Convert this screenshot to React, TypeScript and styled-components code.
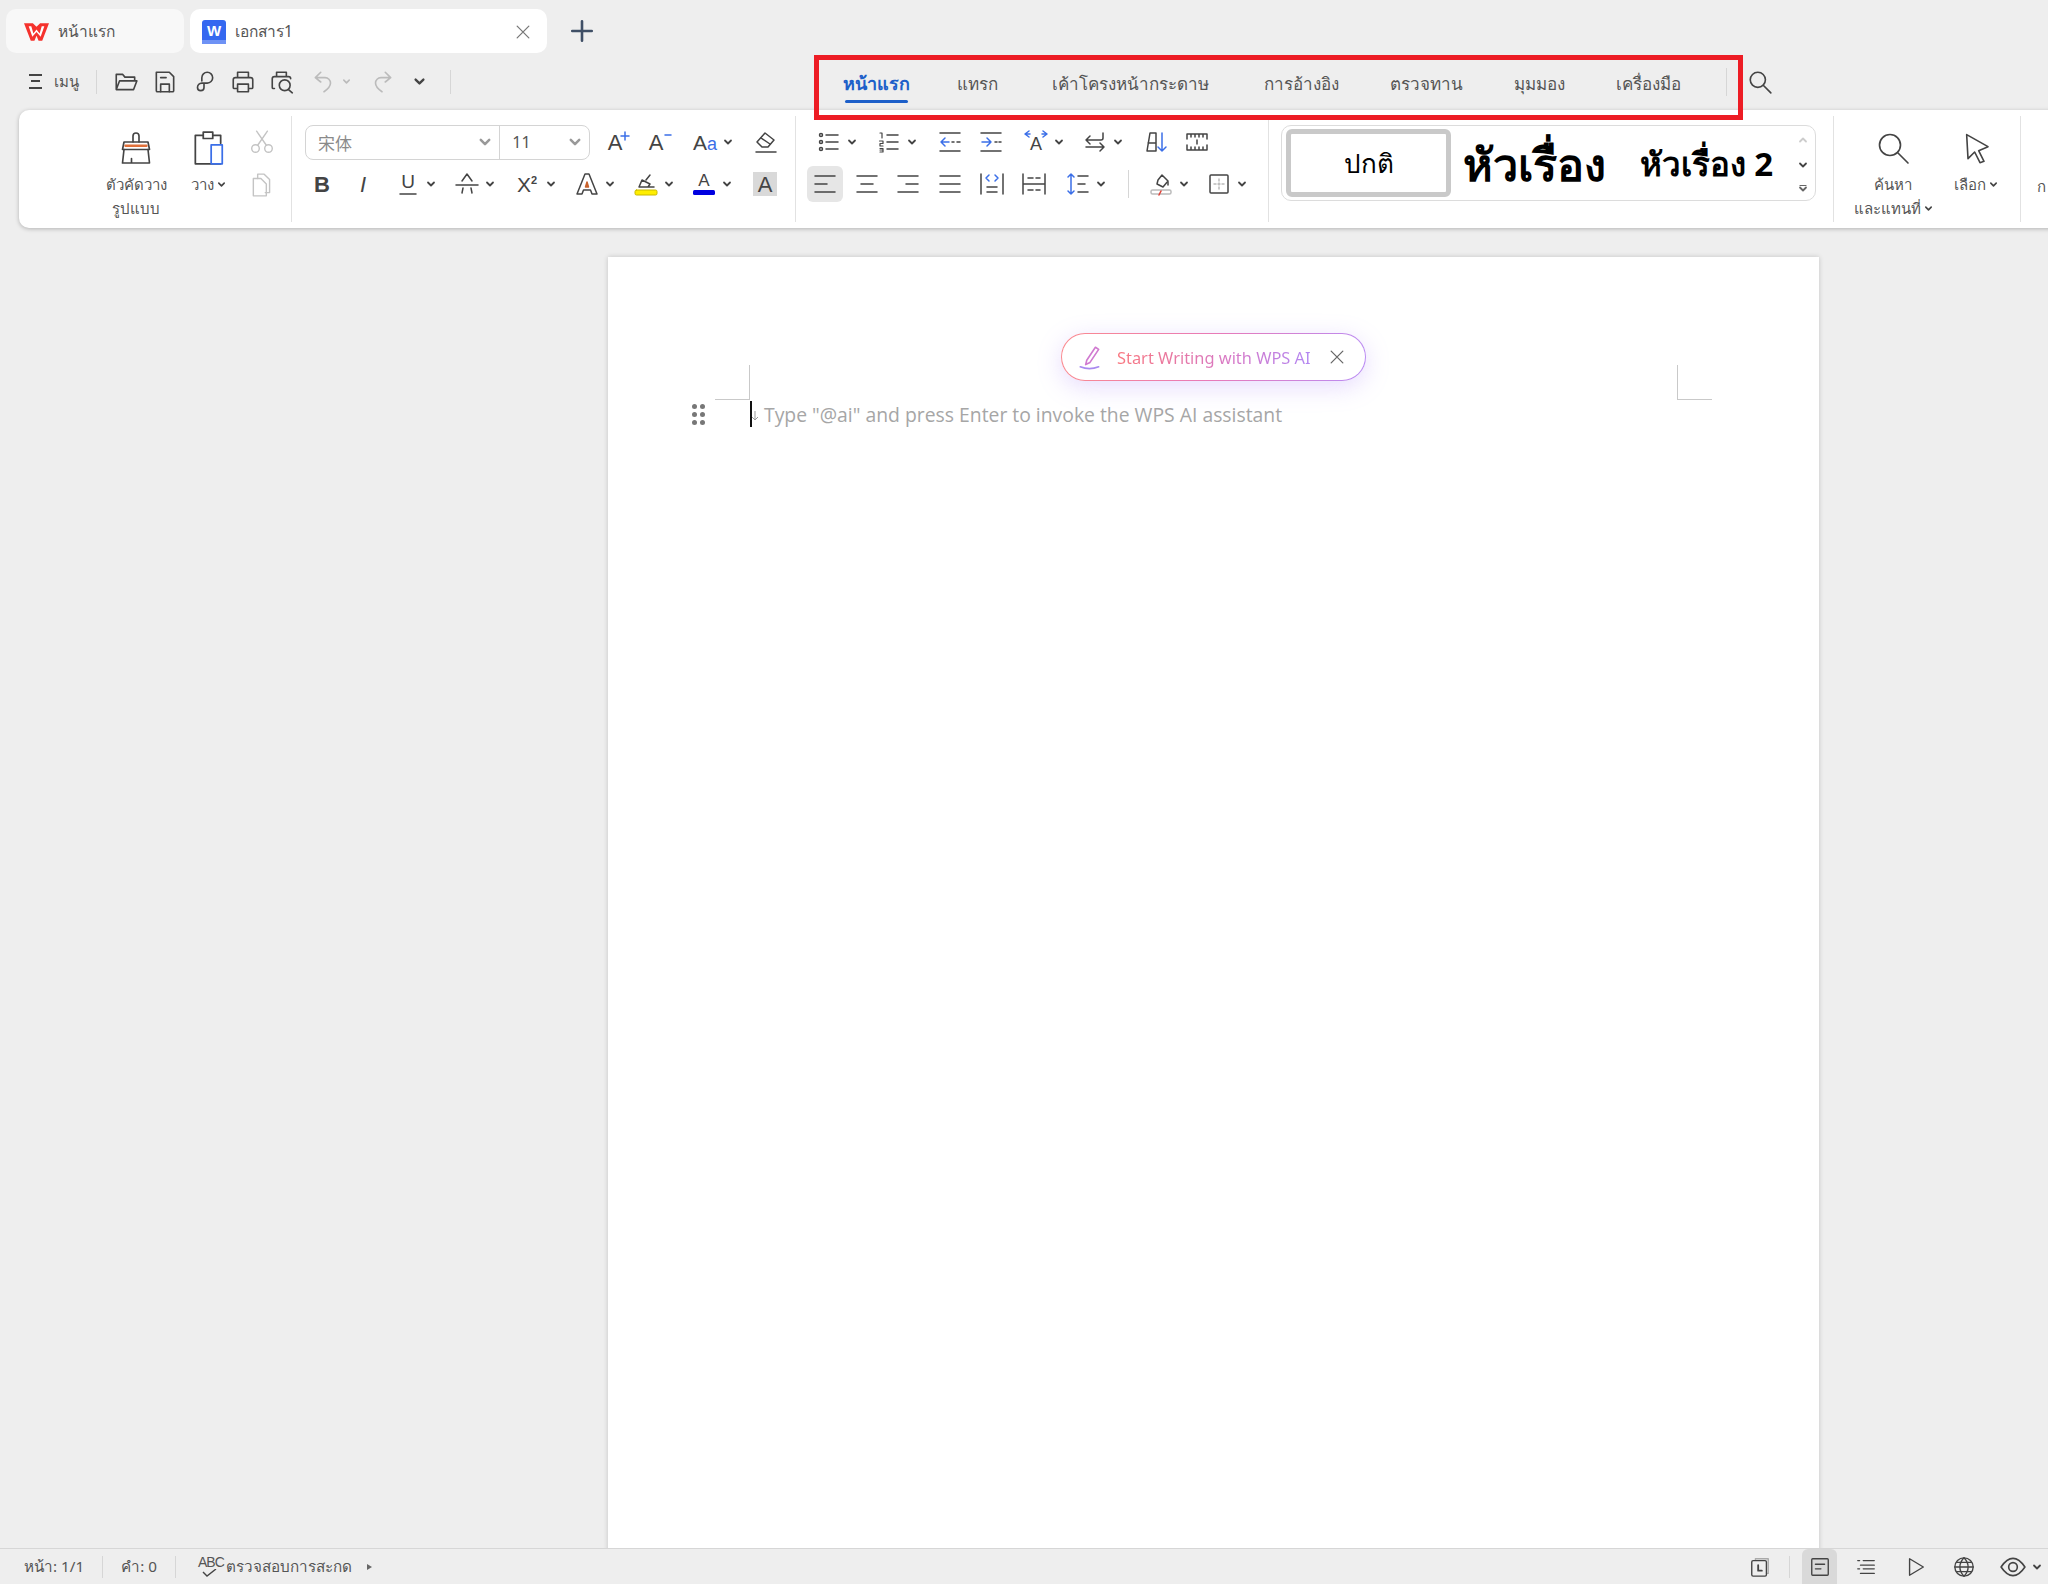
import React from 'react';
import styled, { createGlobalStyle } from 'styled-components';

const GlobalStyle = createGlobalStyle`
  html, body { margin: 0; padding: 0; background: #eeeeee; }
  body { font-family: "Noto Sans", "Liberation Sans", sans-serif; color: #4a4a4a; }
`;

const BLUE = '#3b6fe8';

const Shell = styled.div`
  width: 2048px;
  height: 1584px;
  background: #eeeeee;
  display: flex;
  flex-direction: column;
  overflow: hidden;
`;

type GlyphProps = { $size?: number; $color?: string; $sw?: number };

const Glyph = styled.svg.attrs<GlyphProps>((p) => ({
  viewBox: '0 0 24 24',
  fill: 'none',
  stroke: 'currentColor',
  strokeWidth: p.$sw ?? 1.5,
  strokeLinecap: 'round',
  strokeLinejoin: 'round',
}))<GlyphProps>`
  width: ${(p) => p.$size ?? 24}px;
  height: ${(p) => p.$size ?? 24}px;
  flex: none;
  color: ${(p) => p.$color ?? '#444'};
  display: block;
  overflow: visible;
`;

const IconLabel = styled.text`
  font-family: "Liberation Sans", sans-serif;
  stroke: none;
  fill: currentColor;
`;

const CaretSvg = styled.svg.attrs({ viewBox: '0 0 10 10', fill: 'none', stroke: 'currentColor', strokeWidth: 1.8, strokeLinecap: 'round', strokeLinejoin: 'round' })<{ $color?: string; $size?: number; $up?: boolean }>`
  width: ${(p) => p.$size ?? 10}px;
  height: ${(p) => p.$size ?? 10}px;
  flex: none;
  color: ${(p) => p.$color ?? '#444'};
  transform: ${(p) => (p.$up ? 'rotate(180deg)' : 'none')};
`;
const Caret = (p: { $color?: string; $size?: number; $up?: boolean; $bar?: boolean }) => (
  <CaretSvg {...p}>
    {p.$bar && <path d="M2 1.500h6" strokeWidth="1.200" />}
    <path d="M2 3.500 5 6.500 8 3.500" />
  </CaretSvg>
);

/* ---------- document tabs ---------- */
const TabStrip = styled.div`
  height: 53px;
  flex: none;
  display: flex;
  align-items: flex-end;
  padding-left: 6px;
  gap: 6px;
`;
const DocTab = styled.div<{ $active?: boolean; $w: number }>`
  width: ${(p) => p.$w}px;
  height: 44px;
  box-sizing: border-box;
  border-radius: 10px;
  background: ${(p) => (p.$active ? '#ffffff' : '#f8f8f8')};
  display: flex;
  align-items: center;
  padding: 1px 14px 0 ${(p) => (p.$active ? 12 : 18)}px;
  gap: 9px;
  font-size: 15.5px;
  color: #555;
`;
const TabClose = styled.span`
  margin-left: auto;
  display: flex;
`;
const NewTab = styled.div`
  margin: 0 0 9px 16px;
  display: flex;
  align-items: center;
  height: 26px;
`;

/* ---------- quick access + ribbon tabs ---------- */
const QuickBar = styled.div`
  height: 57px;
  flex: none;
  display: flex;
  align-items: center;
`;
const QuickTools = styled.div`
  width: 825px;
  flex: none;
  display: flex;
  align-items: center;
  padding-left: 29px;
  box-sizing: border-box;
`;
const MenuButton = styled.div`
  display: flex;
  align-items: center;
  gap: 12px;
  font-size: 15px;
  color: #555;
`;
const MenuBars = styled.span`
  width: 13px;
  height: 15px;
  border-top: 2px solid #444;
  border-bottom: 2px solid #444;
  box-sizing: border-box;
  position: relative;
  &::after {
    content: '';
    position: absolute;
    left: 2px;
    right: 2px;
    top: 4px;
    height: 2px;
    background: #444;
  }
`;
const Divider = styled.span<{ $h?: number; $ml?: number; $mr?: number }>`
  width: 1px;
  height: ${(p) => p.$h ?? 24}px;
  background: #d6d6d6;
  flex: none;
  margin-left: ${(p) => p.$ml ?? 0}px;
  margin-right: ${(p) => p.$mr ?? 0}px;
`;
const QuickIcon = styled.span<{ $ml?: number }>`
  display: flex;
  align-items: center;
  gap: 5px;
  margin-left: ${(p) => p.$ml ?? 13}px;
`;
const RibbonNav = styled.nav`
  position: relative;
  display: flex;
  align-items: center;
  height: 100%;
  z-index: 3;
`;
const RibbonTab = styled.div<{ $w: number; $active?: boolean }>`
  width: ${(p) => p.$w}px;
  flex: none;
  text-align: center;
  padding-top: 4px;
  font-size: ${(p) => (p.$active ? 18 : 17)}px;
  position: relative;
  color: ${(p) => (p.$active ? '#1d5fc9' : '#555')};
  font-weight: ${(p) => (p.$active ? 700 : 400)};
  &::after {
    content: '';
    display: ${(p) => (p.$active ? 'block' : 'none')};
    position: absolute;
    left: 20px;
    right: 19px;
    bottom: -5px;
    height: 3px;
    border-radius: 2px;
    background: #1d5fc9;
  }
`;
const Highlight = styled.div`
  position: absolute;
  left: -11px;
  top: 2px;
  width: 929px;
  height: 65px;
  box-sizing: border-box;
  border: 5px solid #ed1c24;
  pointer-events: none;
`;

/* ---------- ribbon ---------- */
const Ribbon = styled.div`
  flex: none;
  height: 118px;
  margin: 0 -20px 0 19px;
  box-sizing: border-box;
  background: #ffffff;
  border-radius: 10px;
  box-shadow: 0 1px 4px rgba(0, 0, 0, 0.25);
  display: flex;
  padding: 6px 0;
  position: relative;
`;
const Group = styled.section<{ $w: number; $last?: boolean }>`
  width: ${(p) => p.$w}px;
  flex: none;
  box-sizing: border-box;
  border-right: ${(p) => (p.$last ? 'none' : '1px solid #e2e2e2')};
  display: flex;
`;
const StackGroup = styled(Group)`
  flex-direction: column;
  padding-top: 8px;
  gap: 6px;
`;
const ToolRow = styled.div`
  display: flex;
  align-items: center;
  height: 36px;
`;
const Tool = styled.div<{ $ml?: number; $active?: boolean; $shaded?: boolean }>`
  display: flex;
  align-items: center;
  justify-content: center;
  gap: 6px;
  flex: none;
  margin-left: ${(p) => p.$ml ?? 0}px;
  ${(p) => p.$active && 'width: 36px; height: 36px; border-radius: 6px; background: #e6e6e6;'}
  ${(p) => p.$shaded && 'background: #d9d9d9;'}
`;
const LargeTool = styled.div<{ $w: number; $ml?: number }>`
  width: ${(p) => p.$w}px;
  margin-left: ${(p) => p.$ml ?? 0}px;
  flex: none;
  display: flex;
  flex-direction: column;
  align-items: center;
  padding-top: 14px;
`;
const LargeIcon = styled.div`
  height: 36px;
  display: flex;
  align-items: center;
  margin-bottom: 6px;
`;
const ToolText = styled.div`
  font-size: 15px;
  line-height: 24px;
  height: 24px;
  color: #555;
  display: flex;
  align-items: center;
  gap: 3px;
  white-space: nowrap;
`;
const SmallColumn = styled.div`
  width: 26px;
  margin-left: 18px;
  padding-top: 13px;
  display: flex;
  flex-direction: column;
  gap: 17px;
`;
const FontCombo = styled.div`
  width: 285px;
  height: 35px;
  box-sizing: border-box;
  margin-left: 13px;
  border: 1px solid #d4d4d4;
  border-radius: 8px;
  display: flex;
  align-items: center;
  flex: none;
`;
const ComboPart = styled.div<{ $w: number; $color: string; $font: string; $size: number }>`
  width: ${(p) => p.$w}px;
  height: 100%;
  box-sizing: border-box;
  display: flex;
  align-items: center;
  justify-content: space-between;
  padding: 0 7px 0 12px;
  color: ${(p) => p.$color};
  font-family: ${(p) => p.$font};
  font-size: ${(p) => p.$size}px;
  & + & { border-left: 1px solid #d4d4d4; }
`;
const Gallery = styled.div`
  width: 535px;
  height: 76px;
  margin: 9px 0 0 12px;
  box-sizing: border-box;
  border: 1px solid #dcdcdc;
  border-radius: 10px;
  padding: 3px 0 3px 4px;
  display: flex;
  align-items: center;
`;
const StyleCard = styled.div<{ $w: number; $selected?: boolean; $size: number; $ml?: number }>`
  width: ${(p) => p.$w}px;
  height: 68px;
  margin-left: ${(p) => p.$ml ?? 0}px;
  flex: none;
  box-sizing: border-box;
  padding-top: ${(p) => (p.$selected ? 1 : 3)}px;
  display: flex;
  align-items: center;
  justify-content: center;
  color: #000;
  white-space: nowrap;
  font-size: ${(p) => p.$size}px;
  font-weight: ${(p) => (p.$selected ? 400 : 700)};
  ${(p) => p.$selected && 'border: 5px solid #c9c9c9; border-radius: 6px;'}
`;
const GalleryScroll = styled.div`
  margin-left: auto;
  width: 24px;
  height: 62px;
  display: flex;
  flex-direction: column;
  align-items: center;
  justify-content: space-between;
  padding-top: 3px;
  box-sizing: border-box;
`;
const EdgeText = styled(ToolText)`
  margin: 58px 0 0 16px;
`;

/* ---------- workspace ---------- */
const Workspace = styled.div`
  flex: 1;
  min-height: 0;
  overflow: hidden;
  padding: 29px 0 0 608px;
`;
const Page = styled.div`
  position: relative;
  width: 1211px;
  height: 1400px;
  background: #ffffff;
  box-shadow: 0 0 5px rgba(0, 0, 0, 0.18);
  display: flex;
  flex-direction: column;
  align-items: flex-start;
`;
const CropMark = styled.span<{ $left: number; $right?: boolean }>`
  position: absolute;
  left: ${(p) => p.$left}px;
  top: 108px;
  width: 35px;
  height: 35px;
  box-sizing: border-box;
  border-bottom: 1px solid #c9c9c9;
  ${(p) => (p.$right ? 'border-left: 1px solid #c9c9c9;' : 'border-right: 1px solid #c9c9c9;')}
`;
const AiPill = styled.div`
  align-self: center;
  margin-top: 76px;
  width: 305px;
  height: 48px;
  box-sizing: border-box;
  border: 1.5px solid transparent;
  border-radius: 24px;
  background:
    linear-gradient(#fff, #fff) padding-box,
    linear-gradient(100deg, #fb8a8e, #e87ab8 50%, #b98cf5) border-box;
  box-shadow: 0 6px 24px rgba(170, 130, 250, 0.28);
  display: flex;
  align-items: center;
  padding: 0 18px 0 15px;
  gap: 14px;
  position: relative;
  z-index: 1;
`;
const AiText = styled.span`
  font-family: "Noto Sans", sans-serif;
  font-size: 16.4px;
  white-space: nowrap;
  background: linear-gradient(90deg, #f9777f, #d678c8 60%, #b287f3);
  -webkit-background-clip: text;
  background-clip: text;
  color: transparent;
`;
const AiClose = styled.span`
  margin-left: auto;
  display: flex;
`;
const PromptRow = styled.div`
  display: flex;
  align-items: center;
  height: 28px;
  margin-top: 19px;
  padding-left: 84px;
`;
const DragHandle = styled.div`
  width: 13px;
  margin-right: -2px;
  display: grid;
  grid-template-columns: 5px 5px;
  grid-auto-rows: 5px;
  gap: 3px;
  & > i {
    background: #777;
    border-radius: 50%;
  }
`;
const Cursor = styled.span`
  width: 2px;
  height: 26px;
  background: #111;
  margin-left: 47px;
`;
const ReturnMark = styled.svg.attrs({ viewBox: '0 0 8 12', fill: 'none', stroke: '#999', strokeWidth: 1 })`
  width: 8px;
  height: 12px;
  margin: 4px 0 0 -1px;
  flex: none;
`;
const Placeholder = styled.span`
  font-family: "Open Sans", "Noto Sans", sans-serif;
  font-size: 19.35px;
  color: #a6a6a6;
  margin-left: 5px;
  white-space: nowrap;
`;

/* ---------- status bar ---------- */
const StatusBar = styled.footer`
  height: 36px;
  flex: none;
  box-sizing: border-box;
  border-top: 1px solid #d6d6d6;
  background: #eeeeee;
  display: flex;
  align-items: center;
  font-size: 15.25px;
  color: #555;
  padding-left: 24px;
  position: relative;
  z-index: 2;
`;
const StatusText = styled.span<{ $ml?: number }>`
  margin-left: ${(p) => p.$ml ?? 0}px;
  white-space: nowrap;
`;
const SpellIcon = styled.span`
  margin-left: 22px;
  margin-right: 3px;
  font-size: 14px;
  letter-spacing: -1px;
  line-height: 14px;
  position: relative;
  width: 25px;
  height: 24px;
  font-family: "Liberation Sans", sans-serif;
`;
const SpellTick = styled.svg.attrs({ viewBox: '0 0 16 8', fill: 'none', stroke: '#444', strokeWidth: 1.4 })`
  position: absolute;
  left: 4px;
  top: 14px;
  width: 16px;
  height: 8px;
`;
const MoreArrow = styled.span`
  margin-left: 15px;
  width: 0;
  height: 0;
  border-left: 5px solid #666;
  border-top: 3.5px solid transparent;
  border-bottom: 3.5px solid transparent;
`;
const StatusRight = styled.div`
  margin-left: auto;
  display: flex;
  align-items: center;
  height: 100%;
  padding-right: 6px;
`;
const StatusIcon = styled.span<{ $ml?: number; $active?: boolean }>`
  display: flex;
  align-items: center;
  justify-content: center;
  gap: 6px;
  height: 100%;
  margin-left: ${(p) => p.$ml ?? 0}px;
  ${(p) => p.$active && 'width: 35px; background: #d9d9d9; border-radius: 6px 6px 0 0;'}
`;

/* ---------- icons ---------- */
const Logo = () => (
  <svg width="25" height="20" viewBox="0 0 24 19">
    <path d="M0 1h8.500L12 4.500 15.500 1H24l-6.500 17H14l-2-5-2 5H6.500z" fill="#f5322d" />
    <path d="M4.500 4H7L9 11l3-4 3 4 2-7h2.500L16 14 12 9.500 8 14z" fill="#fff" />
  </svg>
);
const WordBadge = () => (
  <svg width="24" height="24" viewBox="0 0 24 24">
    <rect width="24" height="24" rx="3" fill="#3568f0" />
    <rect y="20" width="24" height="4" fill="#6e92f5" />
    <text x="12" y="16" textAnchor="middle" fontSize="15" fontWeight="700" fill="#fff" fontFamily="Liberation Sans, sans-serif">W</text>
  </svg>
);
const I = {
  open: <path d="M3 19V5h6l2 2.500h9V11M3 19l3-8h16l-3 8z" />,
  save: <><path d="M4 3h12l4 4v13a1 1 0 0 1-1 1H5a1 1 0 0 1-1-1z" /><path d="M8 21v-7h8v7M8 8h5" /></>,
  pdf: <path d="M10 11V8a5 5 0 1 1 5 5H10a4 4 0 0 0-4 4 3 3 0 0 0 6 0v-4" />,
  print: <path d="M7 8V3h10v5M7 18H4a1 1 0 0 1-1-1v-7a2 2 0 0 1 2-2h14a2 2 0 0 1 2 2v7a1 1 0 0 1-1 1h-3M7 14h10v7H7z" />,
  preview: <><path d="M7 7V3h9v4M5 18H4a1 1 0 0 1-1-1V9a2 2 0 0 1 2-2h13a2 2 0 0 1 2 2" /><circle cx="14.500" cy="15" r="5" /><path d="m18 19 3.500 3" /></>,
  undo: <path d="M9 3 4 8l5 4M4 8h9a5 5 0 0 1 5 5c0 4-3 6-6 8" />,
  redo: <path d="m15 3 5 5-5 4M20 8h-9a5 5 0 0 0-5 5c0 4 3 6 6 8" />,
  erase: <><path d="m3 12 8-9 9 7-6 7H8z" /><path d="m7 8 9 6M2 22h20" /></>,
  strike: <path d="m7 9 5-7 5 7M1 13h22M8 16l-1 5M16 16l1 5" />,
  cut: <><circle cx="6" cy="18" r="3.500" /><circle cx="18" cy="18" r="3.500" /><path d="M8 15 17 2M16 15 7 2" /></>,
  copy: <><path d="M8 6V2h6l5 5v12h-4" /><path d="M4 6h7l5 5v11H4z" /></>,
  brush: <><path d="M10 8V4a2 2 0 0 1 4 0v4" /><path d="M4 8h16l1 5H3z" /><path d="M4 13 3 22h18l-1-9M9 22v-3" /></>,
  bullets: <><circle cx="4" cy="5" r="1.500" /><circle cx="4" cy="12" r="1.500" /><circle cx="4" cy="19" r="1.500" /><path d="M9 5h12M9 12h12M9 19h12" /></>,
  numbers: <><path d="M3 3h2v5M2.500 11H6v2.500H3V16h3M3 18.500h3V22H3M3 20h3" strokeWidth="1.200" /><path d="M10 5h11M10 12h11M10 19h11" /></>,
  ruler: <path d="M2 4h20v5M2 4v5M2 15v5h20v-5M6 4v3M10 4v3M14 4v3M18 4v3M6 20v-3M10 20v-3M14 20v-3M18 20v-3M12 10v4" />,
  swap: <path d="M20 3v5a2 2 0 0 1-2 2H3m4-4-4 4 4 4M3 17h18m-4-4 4 4-4 4" />,
  justifyLow: <path d="M1 2v20M23 2v20M1 12h22M6 6h5M14 6h4M6 18h5M14 18h4" />,
  shade: <><path d="M9 8 13 3l6 6-5 6-6-3z" /><path d="M19 10v3" /><rect x="2" y="18" width="20" height="4" rx="1.500" stroke="#bbb" /></>,
  border: <><rect x="3" y="3" width="18" height="18" rx="1" /><path d="M12 7v10M7 12h10" stroke="#bbb" strokeDasharray="2 2" /></>,
  search: <><circle cx="10" cy="10" r="7" /><path d="m15 15 7 7" /></>,
  arrow: <path d="m5 2 16 9-7 3 4 8-3 1-4-8-5 5z" />,
  close: <path d="M5 5l14 14M19 5 5 19" />,
  plus: <path d="M12 3v18M3 12h18" />,
  history: <><path d="M7 4V3h14v16h-1" stroke="#aaa" /><rect x="3" y="5" width="16" height="17" rx="1.500" /><path d="M10 10v6h4" strokeWidth="2" /></>,
  page: <><rect x="3" y="3" width="18" height="18" rx="1" /><path d="M7 9h10M7 14h6" /></>,
  outline: <path d="M3 5h2M9 5h12M6 10h15M3 14h2M9 14h12M6 19h15" />,
  play: <path d="M5 3v18l15-9z" />,
  globe: <><circle cx="12" cy="12" r="10" /><path d="M2 12h20M12 2c-6 6-6 14 0 20M12 2c6 6 6 14 0 20M4 7h16M4 17h16" /></>,
  eye: <><path d="M1 12C5 6 9 4 12 4s7 2 11 8c-4 6-8 8-11 8s-7-2-11-8z" /><circle cx="12" cy="12" r="4" /></>,
  pen: <><path d="m9 15 8-12 3 2-8 12-4 2z" /><path d="M3 21c5 2 12 2 17 0" stroke="#a98af0" /></>,
};

const LineStack = ({ w }: { w: [number, number][] }) => (
  <Glyph>
    {w.map(([a, b], i) => <path key={i} d={`M${a} ${4 + i * 8}H${b}`} />)}
  </Glyph>
);

const LetterIcon = ({ t, size = 22, weight = 400, italic, children, tx = 12 }: { t: string; size?: number; weight?: number; italic?: boolean; children?: React.ReactNode; tx?: number }) => (
  <Glyph>
    <IconLabel x={tx} y="19.500" textAnchor="middle" fontSize={size} fontWeight={weight} fontStyle={italic ? 'italic' : 'normal'}>{t}</IconLabel>
    {children}
  </Glyph>
);

const App: React.FC = () => (
  <>
    <GlobalStyle />
    <Shell>
      <TabStrip>
        <DocTab $w={178}>
          <Logo />
          หน้าแรก
        </DocTab>
        <DocTab $w={357} $active>
          <WordBadge />
          เอกสาร1
          <TabClose><Glyph $size={20} $color="#777">{I.close}</Glyph></TabClose>
        </DocTab>
        <NewTab><Glyph $size={26} $color="#3f4f66" $sw={2.4}>{I.plus}</Glyph></NewTab>
      </TabStrip>

      <QuickBar>
        <QuickTools>
          <MenuButton><MenuBars />เมนู</MenuButton>
          <Divider $ml={17} />
          <QuickIcon $ml={16}><Glyph $size={26}>{I.open}</Glyph></QuickIcon>
          <QuickIcon><Glyph $size={26}>{I.save}</Glyph></QuickIcon>
          <QuickIcon><Glyph $size={26}>{I.pdf}</Glyph></QuickIcon>
          <QuickIcon><Glyph $size={26}>{I.print}</Glyph></QuickIcon>
          <QuickIcon><Glyph $size={26}>{I.preview}</Glyph></QuickIcon>
          <QuickIcon $ml={16}><Glyph $size={26} $color="#bbb">{I.undo}</Glyph><Caret $color="#bbb" $size={9} /></QuickIcon>
          <QuickIcon $ml={18}><Glyph $size={26} $color="#bbb">{I.redo}</Glyph></QuickIcon>
          <QuickIcon $ml={18}><Caret $size={13} /></QuickIcon>
          <Divider $ml={24} />
        </QuickTools>
        <RibbonNav>
          <RibbonTab $w={102} $active>หน้าแรก</RibbonTab>
          <RibbonTab $w={100}>แทรก</RibbonTab>
          <RibbonTab $w={206}>เค้าโครงหน้ากระดาษ</RibbonTab>
          <RibbonTab $w={136}>การอ้างอิง</RibbonTab>
          <RibbonTab $w={114}>ตรวจทาน</RibbonTab>
          <RibbonTab $w={112}>มุมมอง</RibbonTab>
          <RibbonTab $w={106}>เครื่องมือ</RibbonTab>
          <Divider $ml={25} $h={28} />
          <QuickIcon $ml={20}><Glyph $size={26}>{I.search}</Glyph></QuickIcon>
          <Highlight />
        </RibbonNav>
      </QuickBar>

      <Ribbon>
        <Group $w={273}>
          <LargeTool $w={90} $ml={72}>
            <LargeIcon>
              <Glyph $size={36} $sw={1.1}>
                {I.brush}
                <path d="M5 10.500h14" stroke="#e0703a" strokeWidth="1.600" />
              </Glyph>
            </LargeIcon>
            <ToolText>ตัวคัดวาง</ToolText>
            <ToolText>รูปแบบ</ToolText>
          </LargeTool>
          <LargeTool $w={46} $ml={4}>
            <LargeIcon>
              <Glyph $size={38} $sw={1.1}>
                <path d="M9 4H4v18h16M15 4h5v5M9 2h6v4H9z" />
                <rect x="14" y="10" width="7" height="12" stroke={BLUE} />
              </Glyph>
            </LargeIcon>
            <ToolText>วาง<Caret $size={9} /></ToolText>
          </LargeTool>
          <SmallColumn>
            <Glyph $size={26} $color="#c4c4c4" $sw={1.3}>{I.cut}</Glyph>
            <Glyph $size={26} $color="#c4c4c4" $sw={1.3}>{I.copy}</Glyph>
          </SmallColumn>
        </Group>

        <StackGroup $w={504}>
          <ToolRow>
            <FontCombo>
              <ComboPart $w={194} $size={17} $color="#8a8a8a" $font='"Noto Sans CJK SC", sans-serif'>宋体<Caret $color="#999" $size={14} /></ComboPart>
              <ComboPart $w={90} $size={16} $color="#555" $font='"Noto Sans", sans-serif'>11<Caret $color="#999" $size={14} /></ComboPart>
            </FontCombo>
            <Tool $ml={17}>
              <LetterIcon t="A" tx={8}><path d="M18 2v8M14 6h8" stroke={BLUE} /></LetterIcon>
            </Tool>
            <Tool $ml={17}>
              <LetterIcon t="A" tx={8}><path d="M17 5h6" stroke={BLUE} /></LetterIcon>
            </Tool>
            <Tool $ml={21}>
              <Glyph>
                <IconLabel x="0" y="19.500" fontSize="21">A</IconLabel>
                <IconLabel x="14" y="19.500" fontSize="18" style={{ fill: BLUE }}>a</IconLabel>
              </Glyph>
              <Caret />
            </Tool>
            <Tool $ml={21}><Glyph>{I.erase}</Glyph></Tool>
          </ToolRow>
          <ToolRow>
            <Tool $ml={18}><LetterIcon t="B" weight={700} /></Tool>
            <Tool $ml={17}><LetterIcon t="I" italic /></Tool>
            <Tool $ml={21}><Glyph><IconLabel x="12" y="16" textAnchor="middle" fontSize="19">U</IconLabel><path d="M4 22h16" /></Glyph><Caret /></Tool>
            <Tool $ml={19}><Glyph>{I.strike}</Glyph><Caret /></Tool>
            <Tool $ml={21}><Glyph><IconLabel x="1" y="19.500" fontSize="21">X</IconLabel><IconLabel x="15" y="12" fontSize="11" fontWeight={700}>2</IconLabel></Glyph><Caret /></Tool>
            <Tool $ml={19}><Glyph><path d="M2 22 10 2h4l8 20h-5l-1.500-4h-7L7 22z" /><path d="m10.500 15 1.500-5 1.500 5z" stroke="#c9622c" fill="#c9622c" /></Glyph><Caret /></Tool>
            <Tool $ml={19}><Glyph><path d="m5 15 3-7 8 4-2 3zM12 8l4-5M10 15h10" /><rect x="1" y="18" width="22" height="5" rx="1.500" fill="#ffee00" stroke="#c8b800" strokeWidth="1" /></Glyph><Caret /></Tool>
            <Tool $ml={18}><Glyph><IconLabel x="12" y="14" textAnchor="middle" fontSize="17">A</IconLabel><rect x="1" y="18" width="22" height="5" rx="1.500" fill="#0000e0" stroke="none" /></Glyph><Caret /></Tool>
            <Tool $ml={21} $shaded><LetterIcon t="A" /></Tool>
          </ToolRow>
        </StackGroup>

        <StackGroup $w={473}>
          <ToolRow>
            <Tool $ml={21}><Glyph>{I.bullets}</Glyph><Caret /></Tool>
            <Tool $ml={20}><Glyph>{I.numbers}</Glyph><Caret /></Tool>
            <Tool $ml={21}><Glyph><path d="M2 3h20M2 21h20M14 12h2M19 12h3" /><path d="M11 12H3m4-4-4 4 4 4" stroke={BLUE} /></Glyph></Tool>
            <Tool $ml={17}><Glyph><path d="M2 3h20M2 21h20M16 12h2M20 12h2" /><path d="M3 12h9m-4-4 4 4-4 4" stroke={BLUE} /></Glyph></Tool>
            <Tool $ml={21}><Glyph><IconLabel x="12" y="20" textAnchor="middle" fontSize="18">A</IconLabel><path d="M5 1 1 4l4 3M1 4h5M19 1l4 3-4 3M23 4h-5" stroke={BLUE} /></Glyph><Caret /></Tool>
            <Tool $ml={19}><Glyph>{I.swap}</Glyph><Caret /></Tool>
            <Tool $ml={21}><Glyph><path d="M3 21 6 3h6v18H3zM4 13h8" /><path d="M18 3v18m-4-4 4 4 4-4" stroke={BLUE} /></Glyph></Tool>
            <Tool $ml={17}><Glyph>{I.ruler}</Glyph></Tool>
          </ToolRow>
          <ToolRow>
            <Tool $ml={11} $active><LineStack w={[[2, 22], [2, 14], [2, 22]]} /></Tool>
            <Tool $ml={12}><LineStack w={[[2, 22], [6, 18], [2, 22]]} /></Tool>
            <Tool $ml={17}><LineStack w={[[2, 22], [10, 22], [2, 22]]} /></Tool>
            <Tool $ml={18}><LineStack w={[[2, 22], [2, 22], [2, 22]]} /></Tool>
            <Tool $ml={18}><Glyph><path d="M1 2v20M23 2v20M7 15h10M7 20h10" /><path d="M9 3 6 6l3 3M15 3l3 3-3 3" stroke={BLUE} /></Glyph></Tool>
            <Tool $ml={18}><Glyph>{I.justifyLow}</Glyph></Tool>
            <Tool $ml={20}><Glyph><path d="M12 4h10M12 12h7M12 20h10" /><path d="M5 2v20M2 5l3-3 3 3M2 19l3 3 3-3" stroke={BLUE} /></Glyph><Caret /></Tool>
            <Divider $ml={22} $h={28} />
            <Tool $ml={20}><Glyph>{I.shade}<path d="m10 23 2-4" stroke="#e0433a" /></Glyph><Caret /></Tool>
            <Tool $ml={18}><Glyph>{I.border}</Glyph><Caret /></Tool>
          </ToolRow>
        </StackGroup>

        <Group $w={565}>
          <Gallery>
            <StyleCard $w={165} $size={26} $selected>ปกติ</StyleCard>
            <StyleCard $w={155} $size={45} $ml={6}>หัวเรื่อง</StyleCard>
            <StyleCard $w={135} $size={33} $ml={27}>หัวเรื่อง 2</StyleCard>
            <GalleryScroll>
              <Caret $color="#ccc" $size={10} $up />
              <Caret $size={10} />
              <Caret $color="#666" $size={10} $bar />
            </GalleryScroll>
          </Gallery>
        </Group>

        <Group $w={187}>
          <LargeTool $w={86} $ml={16}>
            <LargeIcon><Glyph $size={36} $sw={1.1}>{I.search}</Glyph></LargeIcon>
            <ToolText>ค้นหา</ToolText>
            <ToolText>และแทนที่<Caret $size={9} /></ToolText>
          </LargeTool>
          <LargeTool $w={70} $ml={5}>
            <LargeIcon><Glyph $size={32} $sw={1.2}>{I.arrow}</Glyph></LargeIcon>
            <ToolText>เลือก<Caret $size={9} /></ToolText>
          </LargeTool>
        </Group>

        <Group $w={40} $last>
          <EdgeText>ก</EdgeText>
        </Group>
      </Ribbon>

      <Workspace>
        <Page>
          <CropMark $left={107} />
          <CropMark $left={1069} $right />
          <AiPill>
            <Glyph $size={26} $color="#d07ad0">{I.pen}</Glyph>
            <AiText>Start Writing with WPS AI</AiText>
            <AiClose><Glyph $size={20} $color="#666">{I.close}</Glyph></AiClose>
          </AiPill>
          <PromptRow>
            <DragHandle><i /><i /><i /><i /><i /><i /></DragHandle>
            <Cursor />
            <ReturnMark><path d="M4 1v9M1 7l3 3 3-3" /></ReturnMark>
            <Placeholder>Type "@ai" and press Enter to invoke the WPS AI assistant</Placeholder>
          </PromptRow>
        </Page>
      </Workspace>

      <StatusBar>
        <StatusText>หน้า: 1/1</StatusText>
        <Divider $ml={18} $h={22} />
        <StatusText $ml={18}>คำ: 0</StatusText>
        <Divider $ml={18} $h={22} />
        <SpellIcon>ABC<SpellTick><path d="M1 3l4 4 9-7" /></SpellTick></SpellIcon>
        <StatusText>ตรวจสอบการสะกด</StatusText>
        <MoreArrow />
        <StatusRight>
          <StatusIcon><Glyph $size={22}>{I.history}</Glyph></StatusIcon>
          <Divider $ml={18} $h={22} />
          <StatusIcon $ml={12} $active><Glyph $size={22}>{I.page}</Glyph></StatusIcon>
          <StatusIcon $ml={18}><Glyph $size={22}>{I.outline}</Glyph></StatusIcon>
          <StatusIcon $ml={28}><Glyph $size={22}>{I.play}</Glyph></StatusIcon>
          <StatusIcon $ml={26}><Glyph $size={22}>{I.globe}</Glyph></StatusIcon>
          <StatusIcon $ml={25}><Glyph $size={26}>{I.eye}</Glyph><Caret $size={10} /></StatusIcon>
        </StatusRight>
      </StatusBar>
    </Shell>
  </>
);

export default App;
